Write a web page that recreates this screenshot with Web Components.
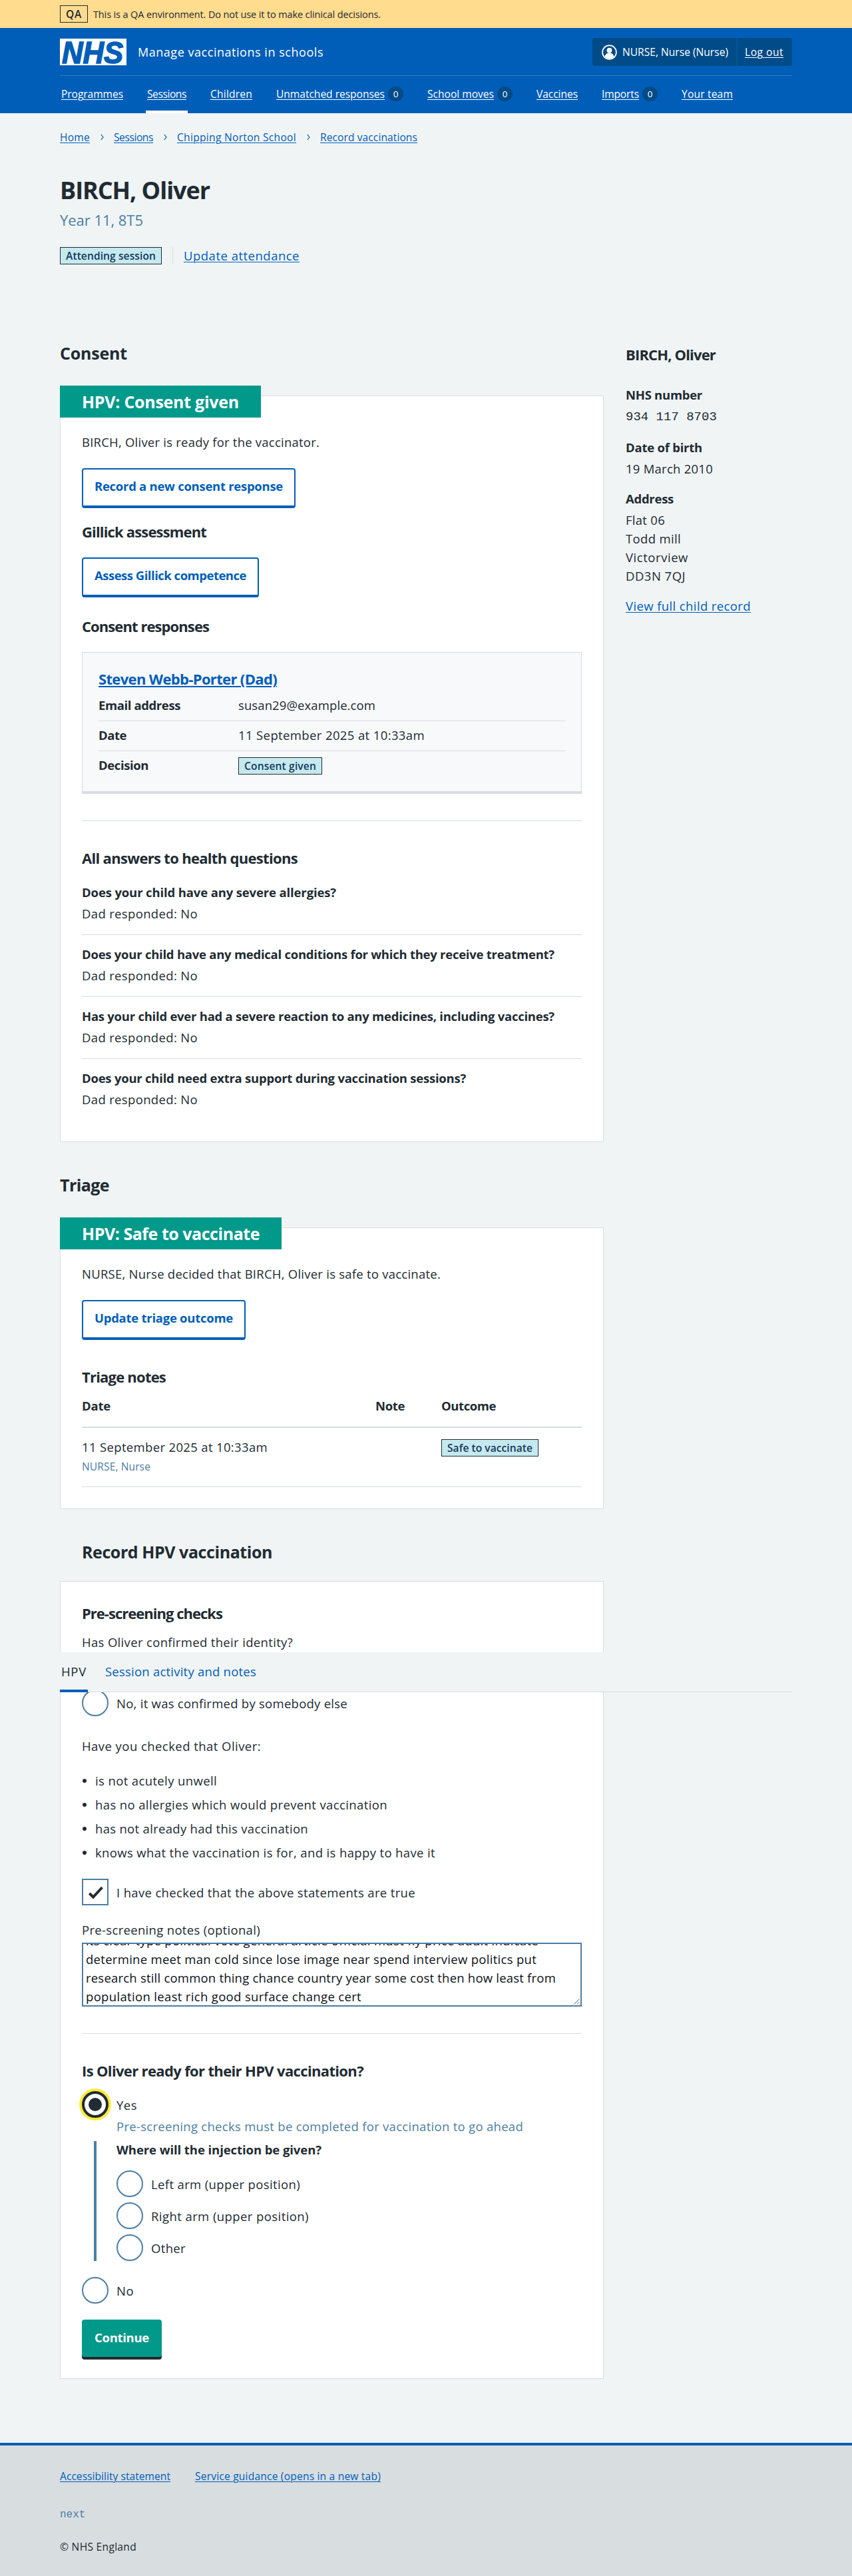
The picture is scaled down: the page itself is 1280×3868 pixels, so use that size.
<!DOCTYPE html>
<html lang="en">
<head>
<meta charset="utf-8">
<title>BIRCH, Oliver – Manage vaccinations in schools</title>
<style>
:root{--blue:#005eb8;--ink:#212b32;--grey:#d8dde0;--muted:#4c7ea3;--bg:#f0f4f5;--green:#00998a}
*{box-sizing:border-box}
html,body{margin:0}
body{background:var(--bg);color:var(--ink);font:450 18.5px/28px "Open Sans","Noto Sans",sans-serif}
main{width:1100px;margin:0 auto;display:flex;flex-direction:column;align-items:flex-start}
h1,h2,h3,p,ul{margin:0;padding:0}
h1,h2,h3,b,p,.r{display:flex}
b,h1,h2,h3{font-weight:670}
h1{font-size:36px;line-height:48px}
h2{font-size:25px;line-height:32px}
h3{font-size:22px;line-height:28px}
a,.link{color:var(--blue)}
.s{font-size:15.6px;line-height:24px}
.muted{color:var(--muted)}
.row{display:flex;align-items:center}
.vr{width:1px;height:26px;background:var(--grey)}
.cols{display:flex;gap:33px;align-items:flex-start}
.col{display:flex;flex-direction:column;align-items:flex-start;width:817px}
aside{display:flex;flex-direction:column;align-items:flex-start;width:250px}
.mono{font:19px/28px "Liberation Mono",monospace}
hr{border:0;height:1px;width:100%;background:var(--grey);margin:0}
ul{list-style:none;display:flex;flex-direction:column;gap:8px}
li{display:flex;align-items:center;gap:13px}
li::before{content:"";width:6px;height:6px;border-radius:50%;background:var(--ink);margin-left:1px}
.tbl{display:grid;grid-template-columns:441px 99px 1fr;width:100%}
.th{border-bottom:2px solid var(--grey);padding-bottom:17px;margin-top:16px}
.td{border-bottom:1px solid var(--grey);padding:15px 0 18px}
</style>
</head>
<body>
<qa-banner></qa-banner>
<nhs-header></nhs-header>
<main>
  <nhs-crumbs></nhs-crumbs>
  <h1 style="margin-top:44px"><fit-text w="225">BIRCH, Oliver</fit-text></h1>
  <p class="muted" style="font-size:22px;margin-top:6px"><fit-text w="125">Year 11, 8T5</fit-text></p>
  <div class="row" style="margin-top:26px">
    <nhs-tag><fit-text w="135">Attending session</fit-text></nhs-tag>
    <span class="vr" style="margin:0 16px"></span>
    <a class="r"><fit-text w="174" u>Update attendance</fit-text></a>
  </div>
  <div class="cols" style="margin-top:116px">
    <div class="col">
      <h2><fit-text w="101">Consent</fit-text></h2>
      <nhs-card labelled style="margin-top:48px;--pb:49px">
        <h2 slot="heading"><fit-text w="236">HPV: Consent given</fit-text></h2>
        <p style="margin-top:23px"><fit-text w="357">BIRCH, Oliver is ready for the vaccinator.</fit-text></p>
        <nhs-button style="margin-top:25px"><fit-text w="283">Record a new consent response</fit-text></nhs-button>
        <h3 style="margin-top:21px"><fit-text w="187">Gillick assessment</fit-text></h3>
        <nhs-button style="margin-top:25px"><fit-text w="228">Assess Gillick competence</fit-text></nhs-button>
        <h3 style="margin-top:29px"><fit-text w="191">Consent responses</fit-text></h3>
        <nhs-response style="margin-top:25px">
          <h3 slot="title" class="link"><fit-text w="268" u thick>Steven Webb-Porter (Dad)</fit-text></h3>
          <nhs-row><b slot="key"><fit-text w="123">Email address</fit-text></b><fit-text w="206">susan29@example.com</fit-text></nhs-row>
          <nhs-row><b slot="key"><fit-text w="42">Date</fit-text></b><fit-text w="280">11 September 2025 at 10:33am</fit-text></nhs-row>
          <nhs-row last><b slot="key"><fit-text w="75">Decision</fit-text></b><nhs-tag style="margin-top:2px"><fit-text w="108">Consent given</fit-text></nhs-tag></nhs-row>
        </nhs-response>
        <hr style="margin-top:40px">
        <h3 style="margin:41px 0 9px"><fit-text w="324">All answers to health questions</fit-text></h3>
        <nhs-answer><b slot="q"><fit-text w="382">Does your child have any severe allergies?</fit-text></b><fit-text w="174">Dad responded: No</fit-text></nhs-answer>
        <nhs-answer><b slot="q"><fit-text w="710">Does your child have any medical conditions for which they receive treatment?</fit-text></b><fit-text w="174">Dad responded: No</fit-text></nhs-answer>
        <nhs-answer><b slot="q"><fit-text w="710">Has your child ever had a severe reaction to any medicines, including vaccines?</fit-text></b><fit-text w="174">Dad responded: No</fit-text></nhs-answer>
        <nhs-answer last><b slot="q"><fit-text w="577">Does your child need extra support during vaccination sessions?</fit-text></b><fit-text w="174">Dad responded: No</fit-text></nhs-answer>
      </nhs-card>

      <h2 style="margin-top:48px"><fit-text w="74">Triage</fit-text></h2>
      <nhs-card labelled style="margin-top:48px;--pb:32px">
        <h2 slot="heading"><fit-text w="267">HPV: Safe to vaccinate</fit-text></h2>
        <p style="margin-top:23px"><fit-text w="539">NURSE, Nurse decided that BIRCH, Oliver is safe to vaccinate.</fit-text></p>
        <nhs-button style="margin-top:25px"><fit-text w="208">Update triage outcome</fit-text></nhs-button>
        <h3 style="margin-top:41px"><fit-text w="126">Triage notes</fit-text></h3>
        <div class="tbl th"><b><fit-text w="43">Date</fit-text></b><b><fit-text w="44">Note</fit-text></b><b><fit-text w="82">Outcome</fit-text></b></div>
        <div class="tbl td">
          <div><p><fit-text w="279">11 September 2025 at 10:33am</fit-text></p><p class="s muted" style="margin-top:3px"><fit-text w="103">NURSE, Nurse</fit-text></p></div>
          <span></span>
          <p style="align-items:flex-start;padding-top:2px"><nhs-tag><fit-text w="128">Safe to vaccinate</fit-text></nhs-tag></p>
        </div>
      </nhs-card>

      <h2 style="margin:48px 0 0 33px"><fit-text w="286">Record HPV vaccination</fit-text></h2>
      <nhs-card style="margin-top:28px;--pb:28px">
        <h3 style="margin-top:33px"><fit-text w="211">Pre-screening checks</fit-text></h3>
        <p style="margin-top:16px"><fit-text w="317">Has Oliver confirmed their identity?</fit-text></p>
        <nhs-tabs style="margin-top:1px"></nhs-tabs>
        <nhs-radio style="margin-top:-4px"><fit-text w="347">No, it was confirmed by somebody else</fit-text></nhs-radio>
        <p style="margin-top:31px"><fit-text w="269">Have you checked that Oliver:</fit-text></p>
        <ul style="margin-top:24px">
          <li><fit-text w="183">is not acutely unwell</fit-text></li>
          <li><fit-text w="439">has no allergies which would prevent vaccination</fit-text></li>
          <li><fit-text w="320">has not already had this vaccination</fit-text></li>
          <li><fit-text w="511">knows what the vaccination is for, and is happy to have it</fit-text></li>
        </ul>
        <nhs-checkbox style="margin-top:25px"><fit-text w="449">I have checked that the above statements are true</fit-text></nhs-checkbox>
        <p style="margin-top:23px"><fit-text w="268">Pre-screening notes (optional)</fit-text></p>
        <nhs-textarea style="margin-top:5px">
          <fit-text w="680">its clear type political vote general article official must fly price adult indicate</fit-text>
          <fit-text w="677">determine meet man cold since lose image near spend interview politics put</fit-text>
          <fit-text w="706">research still common thing chance country year some cost then how least from</fit-text>
          <fit-text w="414">population least rich good surface change cert</fit-text>
        </nhs-textarea>
        <hr style="margin-top:40px">
        <h3 style="margin-top:41px"><fit-text w="423">Is Oliver ready for their HPV vaccination?</fit-text></h3>
        <nhs-radio focused style="margin-top:17px"><fit-text w="31">Yes</fit-text></nhs-radio>
        <p class="muted" style="margin:-1px 0 0 52px"><fit-text w="611">Pre-screening checks must be completed for vaccination to go ahead</fit-text></p>
        <nhs-conditional style="margin-top:8px">
          <b style="margin-top:-1px"><fit-text w="308">Where will the injection be given?</fit-text></b>
          <nhs-radio style="margin-top:17px"><fit-text w="224">Left arm (upper position)</fit-text></nhs-radio>
          <nhs-radio style="margin-top:8px"><fit-text w="237">Right arm (upper position)</fit-text></nhs-radio>
          <nhs-radio style="margin-top:8px"><fit-text w="52">Other</fit-text></nhs-radio>
        </nhs-conditional>
        <nhs-radio style="margin-top:24px"><fit-text w="26">No</fit-text></nhs-radio>
        <nhs-button primary style="margin-top:24px"><fit-text w="82">Continue</fit-text></nhs-button>
      </nhs-card>
    </div>
    <aside>
      <h3 style="margin-top:4px"><fit-text w="135">BIRCH, Oliver</fit-text></h3>
      <b style="margin-top:33px"><fit-text w="115">NHS number</fit-text></b>
      <p class="mono" style="margin-top:5px">934 117 8703</p>
      <b style="margin-top:18px"><fit-text w="115">Date of birth</fit-text></b>
      <p style="margin-top:4px"><fit-text w="131">19 March 2010</fit-text></p>
      <b style="margin-top:17px"><fit-text w="72">Address</fit-text></b>
      <p style="margin-top:4px"><fit-text w="59">Flat 06</fit-text></p>
      <p><fit-text w="83">Todd mill</fit-text></p>
      <p><fit-text w="94">Victorview</fit-text></p>
      <p><fit-text w="90">DD3N 7QJ</fit-text></p>
      <a class="r" style="margin-top:17px"><fit-text w="188" u>View full child record</fit-text></a>
    </aside>
  </div>
</main>
<nhs-footer></nhs-footer>

<script>
const BASE = '*{box-sizing:border-box}:host{display:block}';
function define(name, css, html) {
  const tpl = document.createElement('template');
  tpl.innerHTML = `<style>${BASE}${css}</style>${html}`;
  customElements.define(name, class extends HTMLElement {
    constructor() {
      super();
      this.attachShadow({ mode: 'open' }).appendChild(tpl.content.cloneNode(true));
    }
  });
}

define('qa-banner',
  `:host{background:#ffdc8e;height:42px}
   .in{width:1100px;margin:0 auto;display:flex;align-items:center;gap:8px;height:42px;font-size:15.5px;line-height:24px}
   .tag{border:1px solid var(--ink);width:42px;height:26px;display:flex;align-items:center;justify-content:center;font-weight:600}
   .msg{font-size:14.5px;display:flex;padding-top:1px}`,
  `<div class="in"><span class="tag"><fit-text w="24">QA</fit-text></span><span class="msg"><fit-text w="432">This is a QA environment. Do not use it to make clinical decisions.</fit-text></span></div>`);

define('nhs-nav-item',
  `:host{display:flex;padding:0 2px;height:56px;align-items:center;gap:5px;border-bottom:4px solid transparent;border-top:2px solid transparent}
   :host([current]){border-bottom-color:#fff}
   .badge{display:none;width:23px;height:22px;border-radius:11.5px;background:#004b88;font-size:13.5px;align-items:center;justify-content:center;text-decoration:none}
   :host([count]) .badge{display:flex}`,
  `<slot></slot><span class="badge">0</span>`);

define('nhs-header',
  `:host{background:var(--blue);color:#fff;height:128px}
   .in{width:1100px;margin:0 auto}
   .top{height:71px;display:flex;align-items:center;padding:15px 0 14px}
   svg{display:block;overflow:visible}
   .name{margin-left:17px;display:flex;font-size:18px}
   .acct{margin-left:auto;width:300px;height:42px;border-radius:4px;background:#004b88;display:flex;align-items:center;font-size:15.6px}
   .acct svg{margin:0 8px 0 14px}
   .user{display:flex}
   .sep{width:1px;height:40px;background:var(--blue);margin:0 12px 0 12px}
   .line{height:1px;background:#387bbd}
   nav{display:flex;gap:32px;font-size:15.6px;height:56px}`,
  `<div class="in"><div class="top">
    <svg width="100" height="40" viewBox="0 0 100 40" role="img" aria-label="NHS"><rect width="100" height="40" fill="#fff"/><text x="3" y="36.6" textLength="92" lengthAdjust="spacingAndGlyphs" font-family="Liberation Sans, Arial, sans-serif" font-weight="700" font-style="italic" font-size="47" fill="#005eb8" stroke="#005eb8" stroke-width="1.6">NHS</text></svg>
    <span class="name"><fit-text w="279">Manage vaccinations in schools</fit-text></span>
    <div class="acct"><svg width="23" height="23" viewBox="0 0 23 23"><circle cx="11.5" cy="11.5" r="10.4" fill="none" stroke="#fff" stroke-width="1.8"/><circle cx="11.5" cy="8.6" r="3.9" fill="#fff"/><path d="M4.6 18.2c.6-3.6 3.2-5.6 6.9-5.6s6.3 2 6.9 5.6a10 10 0 0 1-13.8 0z" fill="#fff"/></svg>
      <span class="user"><fit-text w="159">NURSE, Nurse (Nurse)</fit-text></span><span class="sep"></span><fit-text w="58" u>Log out</fit-text></div>
  </div><div class="line"></div>
  <nav>
    <nhs-nav-item><fit-text w="93" u>Programmes</fit-text></nhs-nav-item>
    <nhs-nav-item current><fit-text w="59" u>Sessions</fit-text></nhs-nav-item>
    <nhs-nav-item><fit-text w="63" u>Children</fit-text></nhs-nav-item>
    <nhs-nav-item count><fit-text w="163" u>Unmatched responses</fit-text></nhs-nav-item>
    <nhs-nav-item count><fit-text w="100" u>School moves</fit-text></nhs-nav-item>
    <nhs-nav-item><fit-text w="62" u>Vaccines</fit-text></nhs-nav-item>
    <nhs-nav-item count><fit-text w="56" u>Imports</fit-text></nhs-nav-item>
    <nhs-nav-item><fit-text w="77" u>Your team</fit-text></nhs-nav-item>
  </nav></div>`);

define('nhs-crumbs',
  `:host{display:flex;align-items:center;margin-top:24px;height:24px;font-size:15.6px;line-height:24px;color:var(--blue)}
   svg{display:block;margin:0 15px 0 16px}`,
  (() => {
    const chev = '<svg width="5" height="10" viewBox="0 0 5 10"><path d="M.8 1l3.2 4-3.2 4" fill="none" stroke="#4c7ea3" stroke-width="1.5"/></svg>';
    return `<fit-text w="45" u>Home</fit-text>${chev}<fit-text w="59" u>Sessions</fit-text>${chev}<fit-text w="179" u>Chipping Norton School</fit-text>${chev}<fit-text w="146" u>Record vaccinations</fit-text>`;
  })());

define('nhs-tag',
  `:host{display:inline-flex;align-items:center;height:26px;border:1px solid var(--ink);background:#c5e9ef;color:#15395a;font-size:15.6px;line-height:24px;font-weight:650;padding:0 8px}`,
  `<slot></slot>`);

define('nhs-card',
  `:host{display:flex;flex-direction:column;align-items:flex-start;width:817px;background:#fff;border:1px solid var(--grey);padding:0 32px var(--pb,32px)}
   .label{display:none;background:var(--green);color:#fff;height:48px;padding:8px 33px;margin:-16px 0 0 -33px}
   :host([labelled]) .label{display:flex}`,
  `<div class="label"><slot name="heading"></slot></div><slot></slot>`);

define('nhs-button',
  `:host{display:inline-flex;justify-content:center;height:60px;font-weight:670;color:var(--blue);background:#fff;border:2px solid var(--blue);border-bottom-width:4px;border-radius:4px;padding:11px 17px 0}
   :host([primary]){background:var(--green);color:#fff;border-color:var(--green);border-width:2px;border-bottom:0;height:56px;box-shadow:0 4px 0 var(--ink);margin-bottom:4px}`,
  `<slot></slot>`);

define('nhs-response',
  `:host{display:flex;flex-direction:column;width:100%;height:213px;background:#f8f9fb;border:1px solid var(--grey);border-bottom-width:4px;padding:25px 24px 0}
   .title{margin-bottom:5px}`,
  `<div class="title"><slot name="title"></slot></div><slot></slot>`);

define('nhs-row',
  `:host{display:grid;grid-template-columns:210px 1fr;justify-items:start;border-bottom:1px solid var(--grey);padding:7px 0 9px}
   :host([last]){border:0;padding-bottom:0}`,
  `<slot name="key"></slot><slot></slot>`);

define('nhs-answer',
  `:host{display:flex;flex-direction:column;align-items:flex-start;width:100%;gap:4px;padding:15px 0 17px;border-bottom:1px solid var(--grey)}
   :host([last]){border:0;padding-bottom:0}`,
  `<slot name="q"></slot><slot></slot>`);

define('nhs-tabs',
  `:host{position:relative;z-index:1;display:flex;gap:24px;width:1100px;height:60px;margin-left:-33px;background:var(--bg);border-bottom:1px solid var(--grey)}
   div{height:60px;padding:15px 2px 0;border-bottom:4px solid transparent;display:flex;color:var(--blue)}
   .on{border-color:var(--blue);color:var(--ink)}`,
  `<div class="on"><fit-text w="38">HPV</fit-text></div><div><fit-text w="227">Session activity and notes</fit-text></div>`);

define('nhs-radio',
  `:host{display:flex;gap:12px;height:40px}
   .c{width:40px;height:40px;border:2px solid var(--muted);border-radius:50%;background:#fff;display:flex;align-items:center;justify-content:center}
   .l{display:flex;padding-top:7px}
   :host([focused]) .c{border:4px solid var(--ink);box-shadow:0 0 0 4px #ffeb3b}
   :host([focused]) .c::after{content:"";width:20px;height:20px;border-radius:50%;background:var(--ink)}`,
  `<span class="c"></span><span class="l"><slot></slot></span>`);

define('nhs-checkbox',
  `:host{display:flex;gap:12px;height:40px}
   .c{width:40px;height:40px;border:2px solid var(--muted);background:#fff}
   .l{display:flex;padding-top:7px}svg{display:block}`,
  `<span class="c"><svg width="36" height="36" viewBox="0 0 36 36"><path d="M9.3 19.8l5.7 5.7L28.5 11" fill="none" stroke="#212b32" stroke-width="4"/></svg></span><span class="l"><slot></slot></span>`);

define('nhs-textarea',
  `:host{display:flex;width:100%;height:96px;border:2px solid var(--muted);background:#fff;color:#0b1117;overflow:hidden;align-items:flex-end;font-weight:520}
   .t{display:flex;flex-direction:column;flex:1;margin:0 0 -1px 4px}
   svg{display:block;margin:0 1px 1px 0}`,
  `<div class="t"><slot></slot></div><svg width="9" height="9" viewBox="0 0 9 9"><path d="M.5 8.5l8-8M5 8.5l3.5-3.5" stroke="#4c6272" stroke-width="1" fill="none"/></svg>`);

define('nhs-conditional',
  `:host{display:flex;flex-direction:column;align-items:flex-start;height:180px;margin-left:18px;border-left:4px solid var(--muted);padding-left:30px}`,
  `<slot></slot>`);

define('nhs-footer',
  `:host{margin-top:96px;height:200px;background:var(--grey);border-top:4px solid var(--blue)}
   .in{width:1100px;margin:0 auto;display:flex;flex-direction:column;align-items:flex-start;padding-top:34px;font-size:15.6px;line-height:24px}
   .links{display:flex;gap:37px;color:var(--blue)}
   code{font:16px/24px "Liberation Mono",monospace;color:var(--muted);margin:34px 0 24px}`,
  `<div class="in"><div class="links"><fit-text w="166" u>Accessibility statement</fit-text><fit-text w="279" u>Service guidance (opens in a new tab)</fit-text></div><code>next</code><fit-text w="115">© NHS England</fit-text></div>`);

/* Single-line text whose tracking is tuned so that it spans `w` pixels. */
customElements.define('fit-text', class extends HTMLElement {
  constructor() {
    super();
    this.attachShadow({ mode: 'open' }).innerHTML =
      `<style>:host{display:block;white-space:nowrap;flex:none}
        span{display:inline-block}
        :host([u]) span{text-decoration:underline;text-decoration-thickness:1px;text-underline-offset:2px;text-decoration-skip-ink:auto}
        :host([thick]) span{text-decoration-thickness:2px}</style><span><slot></slot></span>`;
  }
  connectedCallback() {
    const w = +this.getAttribute('w');
    this.style.width = w + 'px';
    const span = this.shadowRoot.querySelector('span');
    const n = this.textContent.length;
    let ls = 0;
    for (let i = 0; i < 3; i++) {
      ls += (w - span.getBoundingClientRect().width) / n;
      span.style.letterSpacing = ls.toFixed(3) + 'px';
    }
  }
});
</script>
</body>
</html>
